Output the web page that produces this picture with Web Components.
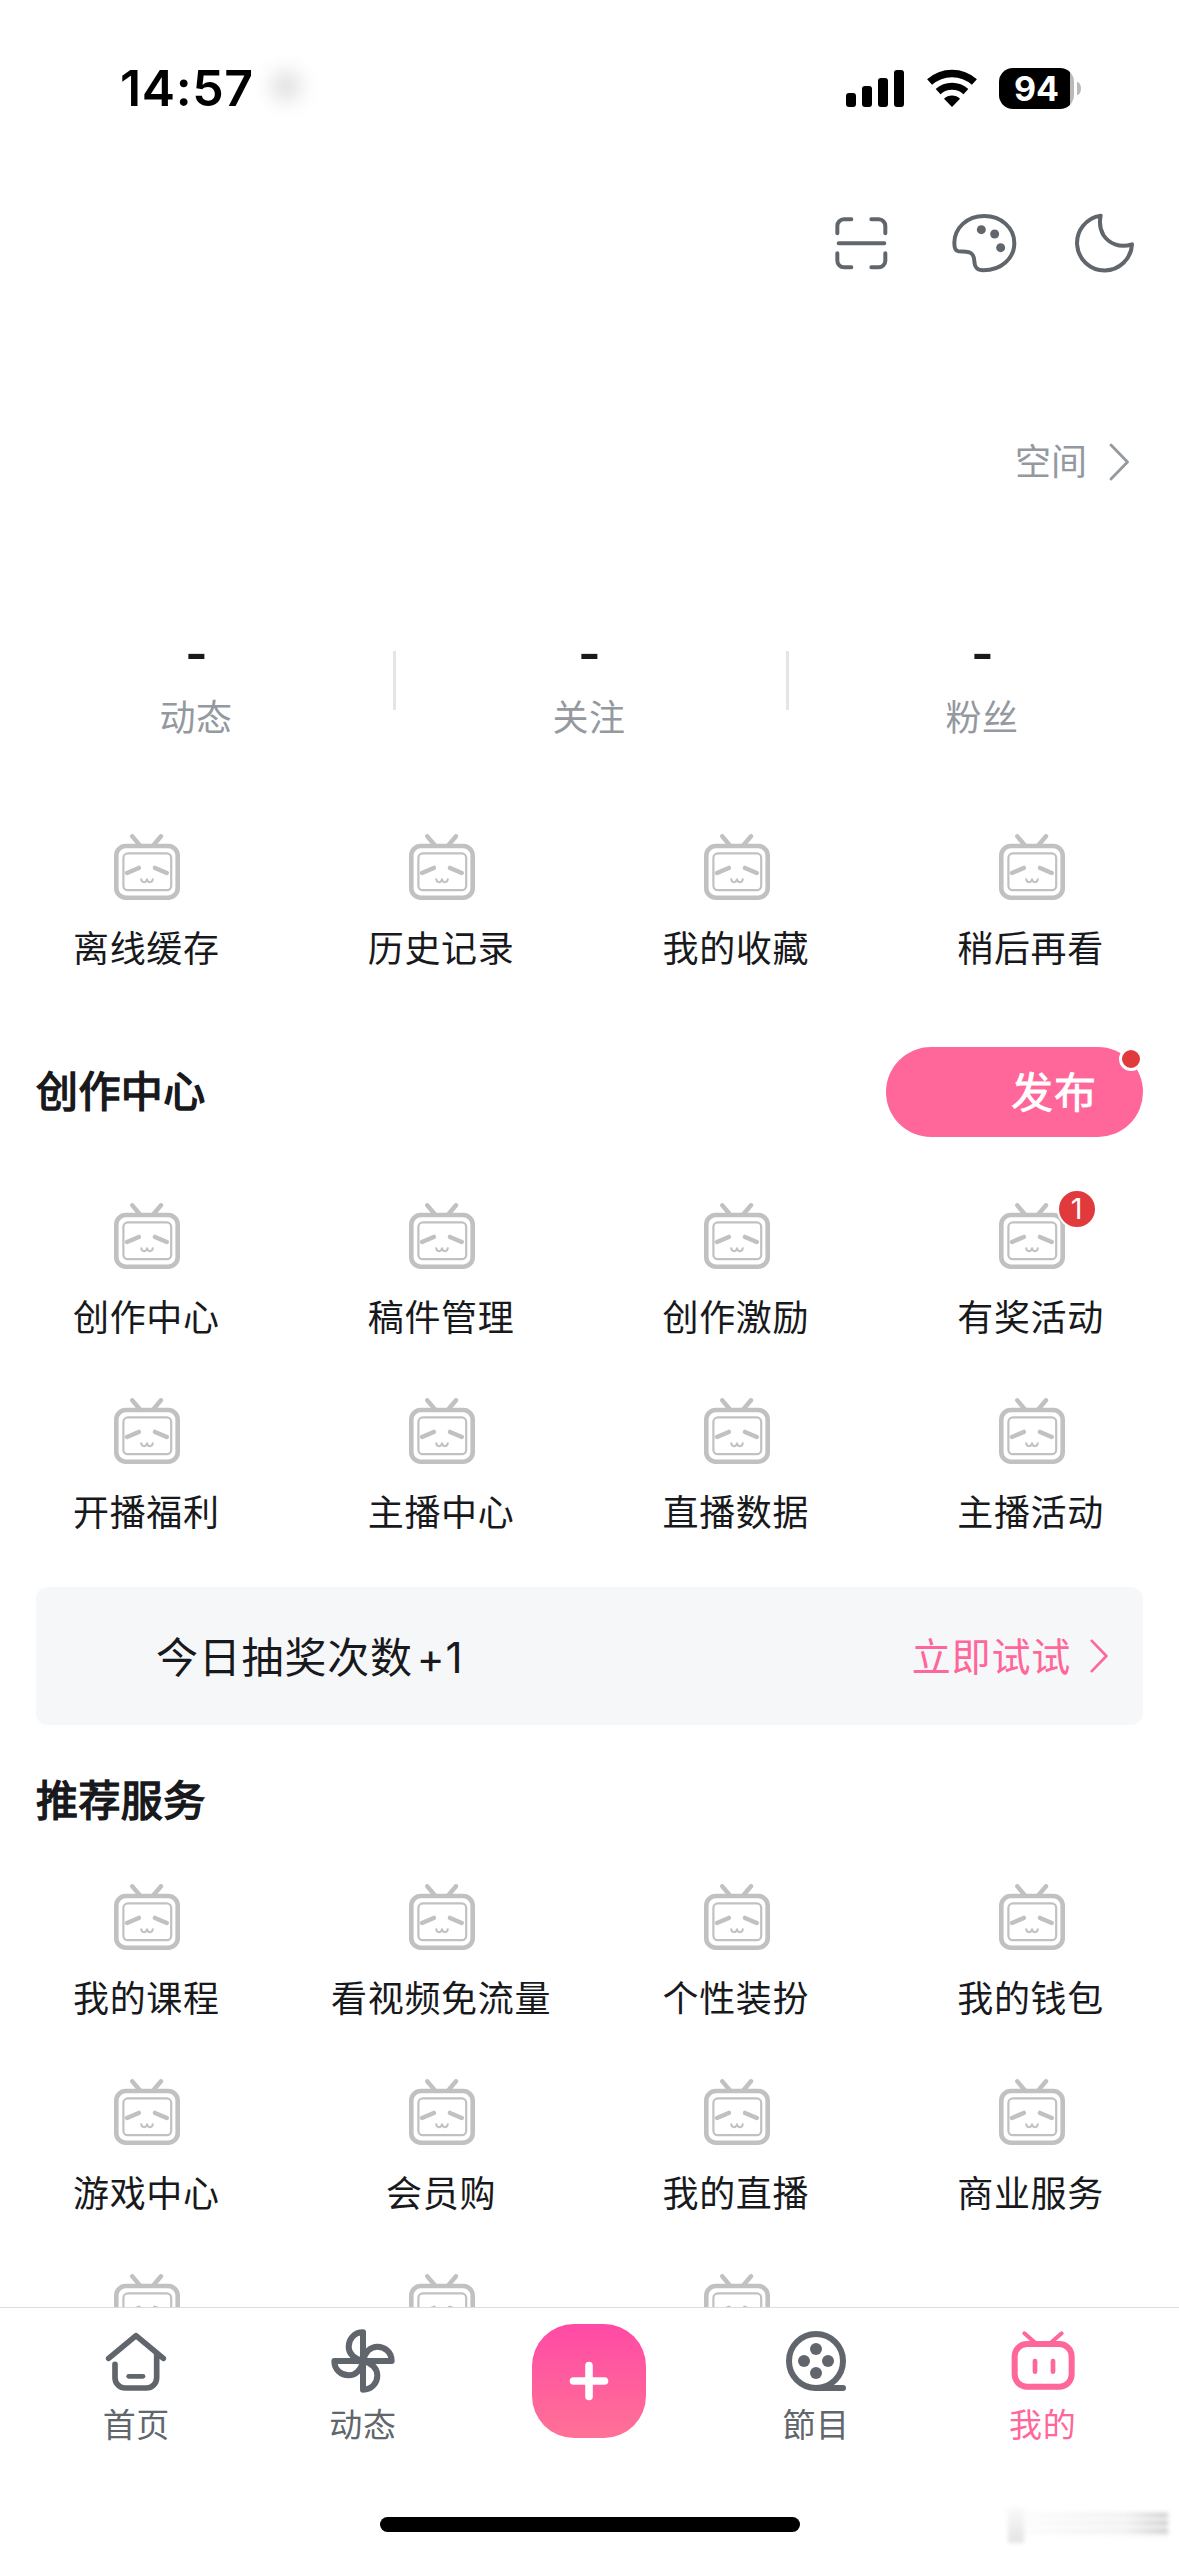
<!DOCTYPE html>
<html lang="zh-CN">
<head>
<meta charset="utf-8">
<title>我的</title>
<style>
html,body{margin:0;background:#fff}
body{font-family:Inter,"Noto Sans CJK SC",sans-serif;color:#18191c}
</style>
</head>
<body>
<mine-page></mine-page>
<script>
const ICONS={
tv:['0 0 66 68',66,68,'<g fill="none" stroke="#c1c1c1" stroke-linecap="round" stroke-linejoin="round"><rect x="2.3" y="12" width="61.4" height="51.7" rx="9.5" stroke-width="4.6"/><rect x="9.4" y="19.4" width="47.8" height="36.8" rx="4.5" stroke-width="2.2"/><path stroke-width="4.4" d="M18.3 2.3 25.6 11M47 2.3 39.6 11M13 39 24.8 33.9M41 33.9 52.8 39"/><path stroke-width="2" d="M27.2 45.2c.6 4 4.8 4 5.8 0 1 4 5.2 4 5.8 0"/></g>'],
scan:['101 527 164 164',54.67,54.67,'<path fill="none" stroke="#61666d" stroke-width="12" stroke-linecap="round" d="M111 579V557a20 20 0 0 1 20-20h22M213 537h22a20 20 0 0 1 20 20v22M255 639v22a20 20 0 0 1-20 20h-22M153 681h-22a20 20 0 0 1-20-20v-22M115 609H252"/>'],
palette:['452 515 200 186',66.67,62,'<path fill="none" stroke="#61666d" stroke-width="12" stroke-linejoin="round" d="M462 608C462 563 500 527 552 527C603 527 642 563 642 608C642 655 602 690 549 690C530 690 523 682 522 662C521 644 515 635 497 634L474 633C464 632 462 624 462 608Z"/><g fill="#61666d"><circle cx="543" cy="568" r="13.5"/><circle cx="583" cy="581" r="13.5"/><circle cx="601" cy="622" r="13.5"/></g>'],
moon:['823 513 186 186',62,62,'<path fill="none" stroke="#61666d" stroke-width="12" stroke-linejoin="round" d="M903 524A82.5 82.5 0 1 0 997 610C960 622 928 608 911 582C900 563 899 543 903 524Z"/>'],
chev:['0 0 20 38',20,38,'<path fill="none" stroke="currentColor" stroke-width="2.8" stroke-linecap="round" stroke-linejoin="round" d="M2 2 18.5 19 2 36"/>'],
next:['0 0 18 34',18,34,'<path fill="none" stroke="currentColor" stroke-width="2.6" stroke-linecap="round" stroke-linejoin="round" d="M1.8 1.8 16.4 17 1.8 32.2"/>'],
home:['134 232 192 192',64,64,'<g fill="none" stroke="#61666d" stroke-linecap="round" stroke-linejoin="round"><path stroke-width="17" d="M148 320 230 252 312 320M167 338V378A31 31 0 0 0 198 409H261A31 31 0 0 0 292 378V308"/><path stroke-width="14" d="M208 374H251"/></g>'],
fan:['813 237 192 192',64,64,'<g fill="none" stroke="#61666d" stroke-width="18" stroke-linejoin="round">'+[0,90,180,270].map(a=>'<path transform="rotate('+a+' 909 333)" d="M909 333V247C882 247 866 268 866 290C866 310 882 328 909 333Z"/>').join('')+'</g>'],
film:['852 117 192 192',64,64,'<g fill="none" stroke="#61666d" stroke-width="18" stroke-linecap="round"><circle cx="948" cy="213" r="81"/><path d="M948 294H1029"/></g><g fill="#61666d"><circle cx="948" cy="177" r="18"/><circle cx="912" cy="213" r="18"/><circle cx="984" cy="213" r="18"/><circle cx="948" cy="249" r="18"/></g>'],
mine:['151 118 192 192',64,64,'<g fill="none" stroke="#ff6699" stroke-linecap="round"><rect x="162" y="163" width="171" height="128" rx="37" stroke-width="18"/><path stroke-width="12" d="M191 131 222 158M303 131 272 158"/><path stroke-width="14" d="M223 214V246M277 214V246"/></g>'],
plus:['0 0 40 40',40,40,'<path stroke="#fff" stroke-width="7.6" stroke-linecap="round" d="M4.5 20H35.5M20 4.5V35.5"/>'],
signal:['0 0 60 38',60,38,'<rect y="24" width="10" height="14" rx="3"/><rect x="16" y="17" width="10" height="21" rx="3"/><rect x="32" y="9" width="10" height="29" rx="3"/><rect x="48" y="1" width="10" height="37" rx="3"/>'],
wifi:['0 0 50 38',50,38,'<g fill="none" stroke="#000"><path stroke-width="7.4" d="M2.6 13.1A33.3 33.3 0 0 1 47.4 13.1"/><path stroke-width="7.2" d="M11.1 22.6A20.7 20.7 0 0 1 38.9 22.6"/></g><path d="M25 38 17 29.7A11.7 11.7 0 0 1 33 29.7Z"/>']
};
const define=(name,css,html)=>customElements.define(name,class extends HTMLElement{
  connectedCallback(){
    if(this.shadowRoot)return;
    const root=this.attachShadow({mode:'open'});
    root.innerHTML='<style>'+css+'</style>'+(typeof html==='function'?html(this):html);
  }
});
define('app-icon',':host{display:block;flex:none}svg{display:block}',el=>{
  const [vb,w,h,body]=ICONS[el.getAttribute('name')];
  return `<svg viewBox="${vb}" width="${w}" height="${h}">${body}</svg>`;
});
define('status-bar',`:host{display:flex;height:176px;box-sizing:border-box;padding:0 102px 0 120px;align-items:center}
.time{font-size:50px;font-weight:600;line-height:60px;letter-spacing:.6px;color:#000}
.smudge{width:30px;height:30px;margin-left:17px;margin-top:-4px;border-radius:50%;background:#dedede;filter:blur(10px)}
.right{margin-left:auto;display:flex;align-items:center}
app-icon+app-icon{margin-left:21px}
.bat{display:flex;margin-left:22px;width:75px;height:41px;border-radius:14px;align-items:center;justify-content:center;background:linear-gradient(90deg,#000 71px,#b9b9b9 71px);color:#fff;font-size:34px;font-weight:700;line-height:41px}
.nub{width:4px;height:13px;margin-left:3px;margin-right:-4px;border-radius:0 4px 4px 0/0 7px 7px 0;background:#b9b9b9}`,
`<span class="time">14:57</span><span class="smudge"></span><div class="right"><app-icon name="signal"></app-icon><app-icon name="wifi"></app-icon><span class="bat">94</span><span class="nub"></span></div>`);
define('tool-row',`:host{display:flex;height:134px;align-items:center;justify-content:flex-end;padding-right:42.7px}app-icon+app-icon{margin-left:57px}app-icon:first-of-type{margin-right:5.4px}`,
`<app-icon name="scan"></app-icon><app-icon name="palette"></app-icon><app-icon name="moon"></app-icon>`);
define('space-link',':host{display:flex;height:60px;margin-top:122px;padding-right:50px;align-items:center;justify-content:flex-end;gap:22px;font-size:36px;line-height:60px;color:#9499a0}',
`<span>空间</span><app-icon name="chev"></app-icon>`);
define('stat-item',`:host{display:flex;flex:1;flex-direction:column;align-items:center}
b{font-size:49px;line-height:38px;height:48px;font-weight:600}span{font-size:36px;line-height:54px;margin-top:8px;letter-spacing:.6px;padding-right:1px;color:#9499a0}`,
el=>`<b>-</b><span>${el.getAttribute('label')}</span>`);
define('stat-row',`:host{display:flex;margin-top:143px;height:199px}i{width:3px;margin:16px -2.5px 0 -.5px;height:59px;background:#e3e5e7}`,
`<stat-item label="动态"></stat-item><i></i><stat-item label="关注"></stat-item><i></i><stat-item label="粉丝"></stat-item>`);
define('grid-item',`:host{display:flex;flex-direction:column;align-items:center;height:195px}
.pic{position:relative}.badge{position:absolute;left:58px;top:-14px;width:36px;height:36px;border:2px solid #fff;border-radius:50%;background:#e13a3d;color:#fff;font-size:29px;line-height:36px;text-align:center}
.label{margin-top:20px;font-size:36px;line-height:54px;letter-spacing:.7px;padding-right:2px;white-space:nowrap}`,
el=>`<div class="pic"><app-icon name="tv"></app-icon>${el.hasAttribute('badge')?`<span class="badge">${el.getAttribute('badge')}</span>`:''}</div><span class="label"><slot></slot></span>`);
define('service-grid',':host{display:grid;grid-template-columns:repeat(4,1fr)}',
el=>el.getAttribute('items').split(',').map(t=>{const [n,b]=t.split(':');return `<grid-item${b?` badge="${b}"`:''}>${n}</grid-item>`}).join(''));
define('section-head',':host{display:flex;align-items:center;padding:0 36px;height:90px}h2{margin:0;font-size:42px;font-weight:400;-webkit-text-stroke:1.5px currentColor;letter-spacing:.4px;line-height:60px}','<h2><slot></slot></h2><slot name="action"></slot>');
define('publish-button',`:host{display:flex;position:relative;margin-left:auto;width:257px;height:90px;border-radius:45px;background:#ff6699;color:#fff;box-sizing:border-box;padding:0 46px 5px 0;align-items:center;justify-content:flex-end;font-size:42px;-webkit-text-stroke:.8px currentColor;letter-spacing:1px}
i{position:absolute;right:0;top:0;width:18px;height:18px;border:3px solid #fff;border-radius:50%;background:#e13a3d}`,'<span>发布</span><i></i>');
define('promo-banner',`:host{display:flex;margin:0 36px;height:138px;border-radius:12px;background:#f6f7f8;align-items:center;padding:0 35px 0 120px;font-size:42px;letter-spacing:.8px}
span{padding-bottom:4px}em{font-style:normal;margin-left:4px}
a{display:flex;margin-left:auto;align-items:center;gap:19px;font-size:39px;color:#ff6699}`,
`<span>今日抽奖次数<em>+1</em></span><a><span>立即试试</span><app-icon name="next"></app-icon></a>`);
define('tab-item',`:host{display:flex;flex:1;flex-direction:column;align-items:center;color:#61666d}:host([active]){color:#ff6699}
span{margin-top:8px;font-size:33px;line-height:48px;letter-spacing:.6px}`,
el=>`<app-icon name="${el.getAttribute('icon')}"></app-icon><span><slot></slot></span>`);
define('tab-bar',`:host{display:flex;flex-direction:column;flex:none;height:249px;box-sizing:border-box;border-top:1px solid #dcdddf;background:#fff}
nav{display:flex;height:190px;padding:21px 23px 0;box-sizing:border-box}
.mid{flex:1;display:flex;justify-content:center}.add{display:flex;align-items:center;justify-content:center;width:114px;height:114px;margin-top:-5px;border-radius:42px;background:linear-gradient(#ff4aa5,#ff7196)}
.foot{display:grid;grid-template-columns:1fr 420px 1fr;margin-top:19px}
.bar{height:15px;border-radius:8px;background:#000}
.mark{display:flex;align-items:center;justify-self:end;margin-right:11px;width:160px;height:36px;margin-top:-10px;filter:blur(2px)}
.blot{width:16px;height:36px;background:linear-gradient(#fafafa,#e3e3e3)}
.streak{flex:1;height:24px;background:linear-gradient(90deg,#fffffff0,#ffffffb0 70%,#ffffff00),repeating-linear-gradient(#c4c4c4 0 3px,#f6f6f6 5px 8px)}`,
`<nav><tab-item icon="home">首页</tab-item><tab-item icon="fan">动态</tab-item><div class="mid"><div class="add"><app-icon name="plus"></app-icon></div></div><tab-item icon="film">節目</tab-item><tab-item icon="mine" active>我的</tab-item></nav><div class="foot"><span></span><span class="bar"></span><span class="mark"><span class="blot"></span><span class="streak"></span></span></div>`);
define('mine-page',`:host{display:flex;flex-direction:column;width:1179px;height:2556px;overflow:hidden;background:#fff}
main{flex:1;min-height:0;overflow:hidden}
.first{height:213px}.create{margin-top:66px;height:384px}.rec{margin-top:38px}
section-head.two{margin-top:31px}`,
`<main><status-bar></status-bar><tool-row></tool-row><space-link></space-link><stat-row></stat-row>
<service-grid class="first" items="离线缓存,历史记录,我的收藏,稍后再看"></service-grid>
<section-head>创作中心<publish-button slot="action"></publish-button></section-head>
<service-grid class="create" items="创作中心,稿件管理,创作激励,有奖活动:1,开播福利,主播中心,直播数据,主播活动"></service-grid>
<promo-banner></promo-banner>
<section-head class="two">推荐服务</section-head>
<service-grid class="rec" items="我的课程,看视频免流量,个性装扮,我的钱包,游戏中心,会员购,我的直播,商业服务,,,"></service-grid></main>
<tab-bar></tab-bar>`);
</script>
</body>
</html>
